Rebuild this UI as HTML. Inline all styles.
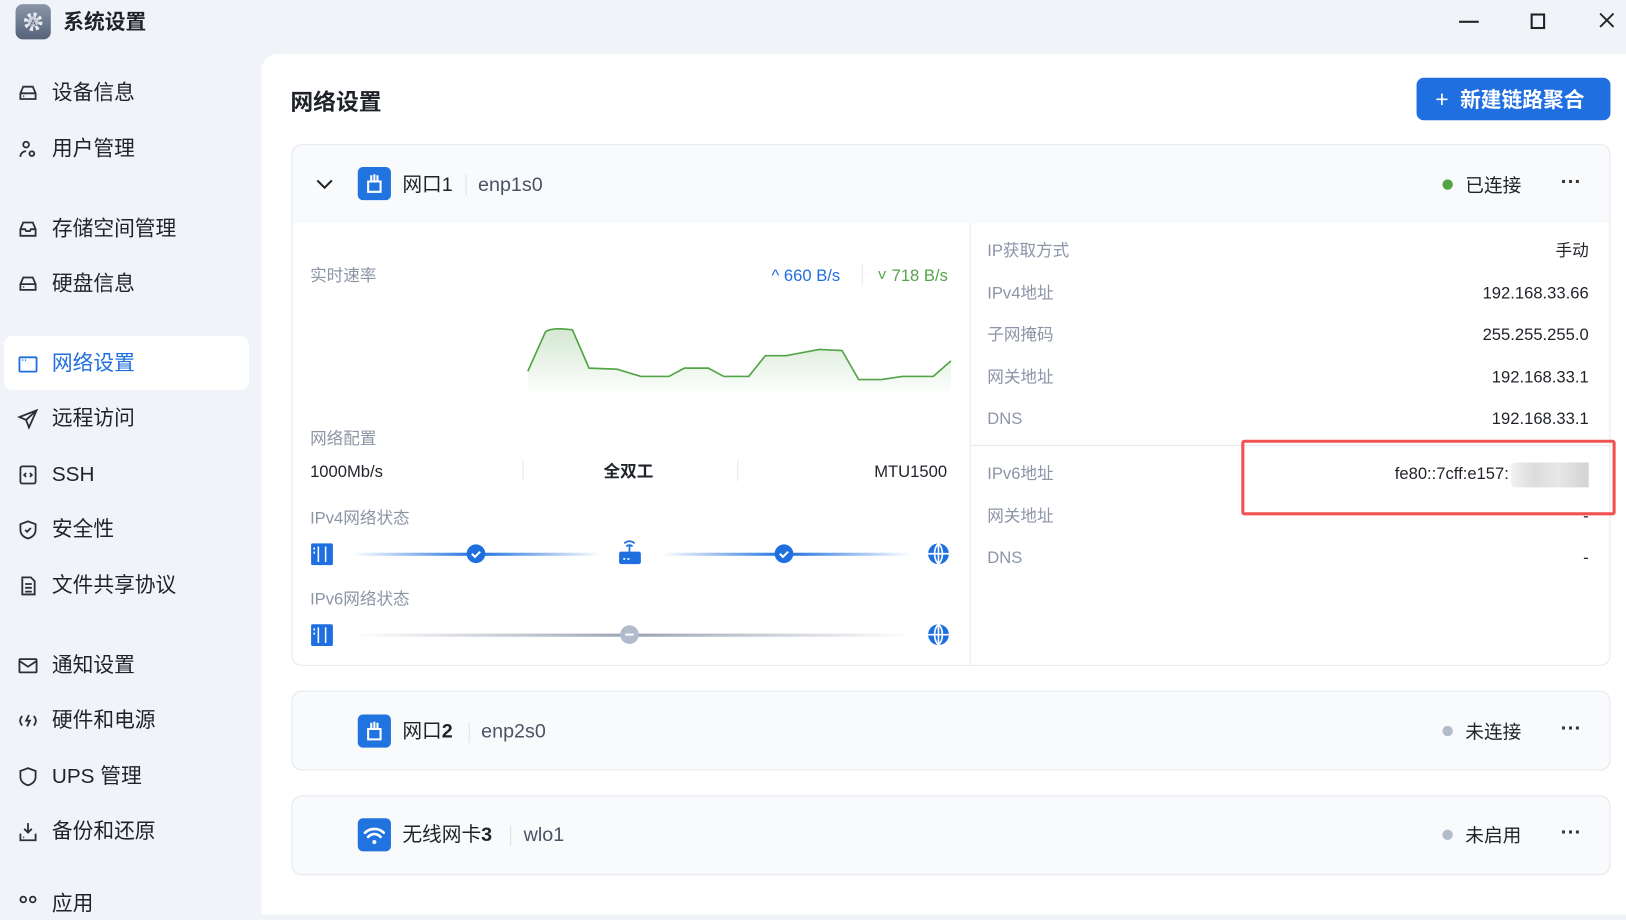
<!DOCTYPE html>
<html><head><meta charset="utf-8"><style>
*{margin:0;padding:0;box-sizing:border-box}
html,body{width:1626px;height:906px;overflow:hidden;background:#f0f3f8}
#w{position:absolute;left:0;top:0;width:1568px;height:874px;transform:scale(1.037);transform-origin:0 0;font-family:"Liberation Sans","Noto Sans CJK SC",sans-serif;color:#1f2329}
.a{position:absolute;white-space:nowrap;line-height:24px}
.si{position:absolute;left:16px;font-size:20px;color:#1f2329;display:flex;align-items:center;height:30px;line-height:30px;margin-top:2px}
.si svg{width:22px;height:22px;margin-right:12px;fill:none;stroke:#2a2f38;stroke-width:1.9}
.lab{color:#8c95a6;font-size:16px}
.card{position:absolute;left:281px;width:1272px;border:1px solid #e3e8ef;border-radius:10px;background:#f8fafc}
.ic{position:absolute;width:32px;height:32px;border-radius:5px;background:#2173e0}
.dot{position:absolute;width:10px;height:10px;border-radius:5px}
.more{position:absolute;font-size:20px;font-weight:bold;color:#333;line-height:20px}
</style></head><body><div id="w">
<div class="a" style="left:15px;top:4px;width:34px;height:34px;border-radius:7px;background:linear-gradient(#8a96a8,#56627a)"></div>
<svg class="a" style="left:20px;top:9px" width="24" height="24" viewBox="0 0 24 24"><circle cx="12" cy="12" r="7" fill="none" stroke="#e8ecf2" stroke-width="4" stroke-dasharray="3 2.5"/><circle cx="12" cy="12" r="5" fill="#c9d0db"/><text x="12" y="16" font-size="9" text-anchor="middle" fill="#56627a" font-family="Liberation Sans">A</text></svg>
<div class="a" style="left:61px;top:10px;font-size:20px;font-weight:bold">系统设置</div>
<div class="a" style="left:1407px;top:20px;width:19px;height:2px;background:#222"></div>
<div class="a" style="left:1476px;top:13px;width:14px;height:15px;border:2px solid #222"></div>
<svg class="a" style="left:1542px;top:12px" width="15" height="15" viewBox="0 0 15 15"><path d="M1 1l13 13M14 1L1 14" stroke="#222" stroke-width="1.8"/></svg>

<div class="a" style="left:4px;top:324px;width:236px;height:52px;background:#fff;border-radius:8px"></div>
<div class="si" style="top:73px"><svg viewBox="0 0 24 24"><path d="M4 12l3-7h10l3 7v6H4z M4 12h16 M7 15h1"/></svg>设备信息</div>
<div class="si" style="top:127px"><svg viewBox="0 0 24 24"><circle cx="10" cy="7" r="3"/><path d="M4 20c0-4 3-6 6-6 M16 14a2.5 2.5 0 1 0 .1 0"/></svg>用户管理</div>
<div class="si" style="top:204px"><svg viewBox="0 0 24 24"><path d="M4 12l3-7h10l3 7v7H4z M4 12h5l1 2h4l1-2h5"/></svg>存储空间管理</div>
<div class="si" style="top:257px"><svg viewBox="0 0 24 24"><path d="M4 12l3-7h10l3 7v6H4z M4 12h16 M7 15h1"/></svg>硬盘信息</div>
<div class="si" style="top:334px;color:#1f6fe0"><svg viewBox="0 0 24 24" style="stroke:#1f6fe0"><rect x="3" y="5" width="18" height="15" rx="1"/><path d="M6 8h1M9 8h1"/></svg>网络设置</div>
<div class="si" style="top:387px"><svg viewBox="0 0 24 24"><path d="M21 3L3 10l7 3 3 8z M10 13l11-10"/></svg>远程访问</div>
<div class="si" style="top:441px"><svg viewBox="0 0 24 24"><rect x="4" y="3" width="16" height="18" rx="2"/><path d="M10 10l-2 2 2 2M14 10l2 2-2 2"/></svg>SSH</div>
<div class="si" style="top:494px"><svg viewBox="0 0 24 24"><path d="M12 3l8 3v6c0 5-4 8-8 9-4-1-8-4-8-9V6z M9 12l2 2 4-4"/></svg>安全性</div>
<div class="si" style="top:548px"><svg viewBox="0 0 24 24"><path d="M6 3h9l4 4v14H6z M9 10h7M9 14h7M9 18h7"/></svg>文件共享协议</div>
<div class="si" style="top:625px"><svg viewBox="0 0 24 24"><rect x="3" y="5" width="18" height="14" rx="1"/><path d="M3 7l9 6 9-6"/></svg>通知设置</div>
<div class="si" style="top:678px"><svg viewBox="0 0 24 24"><path d="M6 7c-3 3-3 7 0 10M18 7c3 3 3 7 0 10M13 6l-3 6h4l-3 6"/></svg>硬件和电源</div>
<div class="si" style="top:732px"><svg viewBox="0 0 24 24"><path d="M12 3l8 3v6c0 5-4 8-8 9-4-1-8-4-8-9V6z"/></svg>UPS 管理</div>
<div class="si" style="top:785px"><svg viewBox="0 0 24 24"><path d="M12 3v10M8 9l4 4 4-4M4 14v7h16v-7 M7 18h1"/></svg>备份和还原</div>
<div class="si" style="top:855px"><svg viewBox="0 0 24 24"><circle cx="7" cy="7" r="3"/><circle cx="17" cy="7" r="3"/></svg>应用</div>

<div class="a" style="left:252px;top:52px;width:1316px;height:830px;background:#fff;border-top-left-radius:16px"></div>
<div class="a" style="left:280px;top:85px;font-size:22px;font-weight:bold;line-height:28px">网络设置</div>
<div class="a" style="left:1366px;top:75px;width:187px;height:41px;background:#1f6fe0;border-radius:7px;color:#fff;font-size:20px;font-weight:bold;padding:0 0 0 18px;line-height:41px"><span style="font-weight:normal;font-size:22px">+</span>&nbsp; 新建链路聚合</div>

<div class="card" style="top:139px;height:503px;overflow:hidden">
 <div class="a" style="left:0;top:75px;width:1272px;height:430px;background:#fff"></div>
 <div class="a" style="left:653px;top:75px;width:1px;height:430px;background:#e6eaf0"></div>
 <div class="a" style="left:653px;top:289px;width:620px;height:1px;background:#e6eaf0"></div>
</div>
<svg class="a" style="left:304px;top:171px" width="18" height="14" viewBox="0 0 18 14"><path d="M2 3l7 7 7-7" fill="none" stroke="#222" stroke-width="2"/></svg>
<div class="ic" style="left:345px;top:161px"></div>
<svg class="a" style="left:345px;top:161px" width="32" height="32" viewBox="0 0 32 32"><path d="M13 14V8M16 14V7M19 14V8M10 14h12v10H10z" fill="none" stroke="#fff" stroke-width="2"/></svg>
<div class="a" style="left:388px;top:166px;font-size:19px;line-height:26px">网口1</div>
<div class="a" style="left:449px;top:168px;width:1px;height:20px;background:#dde2ea"></div>
<div class="a" style="left:461px;top:166px;font-size:19px;color:#4a5363;line-height:26px">enp1s0</div>
<div class="dot" style="left:1391px;top:173px;background:#52a447"></div>
<div class="a" style="left:1413px;top:166px;font-size:18px;line-height:26px">已连接</div>
<div class="more" style="left:1505px;top:166px">···</div>

<div class="a lab" style="left:299px;top:255px">实时速率</div>
<div class="a" style="left:744px;top:255px;font-size:16px;color:#1f6fe0">^ 660 B/s</div>
<div class="a" style="left:831px;top:255px;width:1px;height:20px;background:#e3e8ef"></div>
<div class="a" style="left:846px;top:255px;font-size:16px;color:#52a447">˅ 718 B/s</div>
<svg class="a" style="left:500px;top:300px" width="430" height="90" viewBox="500 300 430 90">
<defs><linearGradient id="g" x1="0" y1="0" x2="0" y2="1"><stop offset="0" stop-color="#52a447" stop-opacity=".25"/><stop offset="1" stop-color="#52a447" stop-opacity="0"/></linearGradient></defs>
<path d="M509 358L526 320 Q530 317 540 317L552 318 568 355 595 356 618 363 645 363 660 355 683 355 698 363 722 363 738 343 758 343 790 337 812 338 828 366 850 366 870 363 900 363 917 348 L917 382 509 382Z" fill="url(#g)"/>
<path d="M509 358L526 320 Q530 317 540 317L552 318 568 355 595 356 618 363 645 363 660 355 683 355 698 363 722 363 738 343 758 343 790 337 812 338 828 366 850 366 870 363 900 363 917 348" fill="none" stroke="#52a447" stroke-width="1.6"/>
</svg>
<div class="a lab" style="left:299px;top:412px">网络配置</div>
<div class="a" style="left:299px;top:444px;font-size:16px">1000Mb/s</div>
<div class="a" style="left:504px;top:444px;width:1px;height:20px;background:#e3e8ef"></div>
<div class="a" style="left:582px;top:444px;font-size:16px;font-weight:bold">全双工</div>
<div class="a" style="left:711px;top:444px;width:1px;height:20px;background:#e3e8ef"></div>
<div class="a" style="left:843px;top:444px;font-size:16px">MTU1500</div>

<div class="a lab" style="left:299px;top:489px">IPv4网络状态</div>
<div class="a lab" style="left:299px;top:567px">IPv6网络状态</div>
<svg class="a" style="left:290px;top:515px" width="640" height="115" viewBox="290 515 640 115">
<defs>
<linearGradient id="b1" x1="0" x2="1"><stop offset="0" stop-color="#1f6fe0" stop-opacity="0"/><stop offset=".5" stop-color="#1f6fe0"/><stop offset="1" stop-color="#1f6fe0" stop-opacity="0"/></linearGradient>
<linearGradient id="b2" x1="0" x2="1"><stop offset="0" stop-color="#9aa3b2" stop-opacity="0"/><stop offset=".5" stop-color="#9aa3b2"/><stop offset="1" stop-color="#9aa3b2" stop-opacity="0"/></linearGradient>
<g id="sw"><rect x="-10" y="-10" width="21" height="21" rx="1.5" fill="#1f6fe0"/><path d="M-3-7v15M4-7v15M-7-6v2M-7-2v2" stroke="#fff" stroke-width="1.5"/></g>
<g id="gl"><circle r="10" fill="#1f6fe0"/><path d="M0-10v20M-10 0h20M0-10c-5 5-5 15 0 20M0-10c5 5 5 15 0 20" stroke="#fff" stroke-width="1.6" fill="none"/></g>
<g id="ck"><circle r="9" fill="#1f6fe0"/><path d="M-4 0l3 3 5-5" stroke="#fff" stroke-width="2" fill="none"/></g>
</defs>
<rect x="340" y="533" width="240" height="3" fill="url(#b1)"/>
<rect x="638" y="533" width="240" height="3" fill="url(#b1)"/>
<rect x="340" y="611" width="540" height="3" fill="url(#b2)"/>
<use href="#sw" x="310" y="534"/><use href="#ck" x="459" y="534"/><use href="#ck" x="756" y="534"/><use href="#gl" x="905" y="534"/>
<rect x="597" y="532" width="21" height="12" rx="2" fill="#1f6fe0"/><path d="M607 532v-6M602 524a7 7 0 0 1 10 0M604 527a4 4 0 0 1 6 0" stroke="#1f6fe0" stroke-width="1.7" fill="none"/><path d="M601 539h2M605 539h2" stroke="#fff" stroke-width="1.5"/>
<use href="#sw" x="310" y="612"/><use href="#gl" x="905" y="612"/>
<circle cx="607" cy="612" r="9" fill="#b0bccb"/><path d="M603 612h8" stroke="#fff" stroke-width="2"/>
</svg>

<div class="a lab" style="left:952px;top:231px">IP获取方式</div><div class="a" style="right:36px;top:231px;font-size:16px">手动</div>
<div class="a lab" style="left:952px;top:272px">IPv4地址</div><div class="a" style="right:36px;top:272px;font-size:16px">192.168.33.66</div>
<div class="a lab" style="left:952px;top:312px">子网掩码</div><div class="a" style="right:36px;top:312px;font-size:16px">255.255.255.0</div>
<div class="a lab" style="left:952px;top:353px">网关地址</div><div class="a" style="right:36px;top:353px;font-size:16px">192.168.33.1</div>
<div class="a lab" style="left:952px;top:393px">DNS</div><div class="a" style="right:36px;top:393px;font-size:16px">192.168.33.1</div>
<div class="a lab" style="left:952px;top:446px">IPv6地址</div><div class="a" style="right:113px;top:446px;font-size:16px">fe80::7cff:e157:</div>
<div class="a" style="left:1457px;top:446px;width:75px;height:24px;background:linear-gradient(90deg,#f2f2f2,#dcdcdc 30%,#e8e8e8 60%,#d2d2d4);border-radius:4px 0 0 4px"></div>
<div class="a lab" style="left:952px;top:487px">网关地址</div><div class="a" style="right:36px;top:487px;font-size:16px">-</div>
<div class="a lab" style="left:952px;top:527px">DNS</div><div class="a" style="right:36px;top:527px;font-size:16px">-</div>
<div class="a" style="left:1197px;top:424px;width:361px;height:73px;border:3.5px solid #f05252;border-radius:3px"></div>

<div class="card" style="top:666px;height:77px"></div>
<div class="ic" style="left:345px;top:689px"></div>
<svg class="a" style="left:345px;top:689px" width="32" height="32" viewBox="0 0 32 32"><path d="M13 14V8M16 14V7M19 14V8M10 14h12v10H10z" fill="none" stroke="#fff" stroke-width="2"/></svg>
<div class="a" style="left:388px;top:693px;font-size:19px;line-height:26px">网口<b>2</b></div>
<div class="a" style="left:452px;top:696px;width:1px;height:20px;background:#dde2ea"></div>
<div class="a" style="left:464px;top:693px;font-size:19px;color:#4a5363;line-height:26px">enp2s0</div>
<div class="dot" style="left:1391px;top:700px;background:#b0bccb"></div>
<div class="a" style="left:1413px;top:693px;font-size:18px;line-height:26px">未连接</div>
<div class="more" style="left:1505px;top:693px">···</div>

<div class="card" style="top:767px;height:77px"></div>
<div class="ic" style="left:345px;top:789px"></div>
<svg class="a" style="left:345px;top:789px" width="32" height="32" viewBox="0 0 32 32"><path d="M7 14a13 13 0 0 1 18 0M10 18a8 8 0 0 1 12 0" fill="none" stroke="#fff" stroke-width="2.6" stroke-linecap="round"/><circle cx="16" cy="23" r="2" fill="#fff"/></svg>
<div class="a" style="left:388px;top:793px;font-size:19px;line-height:26px">无线网卡<b>3</b></div>
<div class="a" style="left:492px;top:796px;width:1px;height:20px;background:#dde2ea"></div>
<div class="a" style="left:505px;top:793px;font-size:19px;color:#4a5363;line-height:26px">wlo1</div>
<div class="dot" style="left:1391px;top:800px;background:#b0bccb"></div>
<div class="a" style="left:1413px;top:793px;font-size:18px;line-height:26px">未启用</div>
<div class="more" style="left:1505px;top:793px">···</div>
</div></body></html>
